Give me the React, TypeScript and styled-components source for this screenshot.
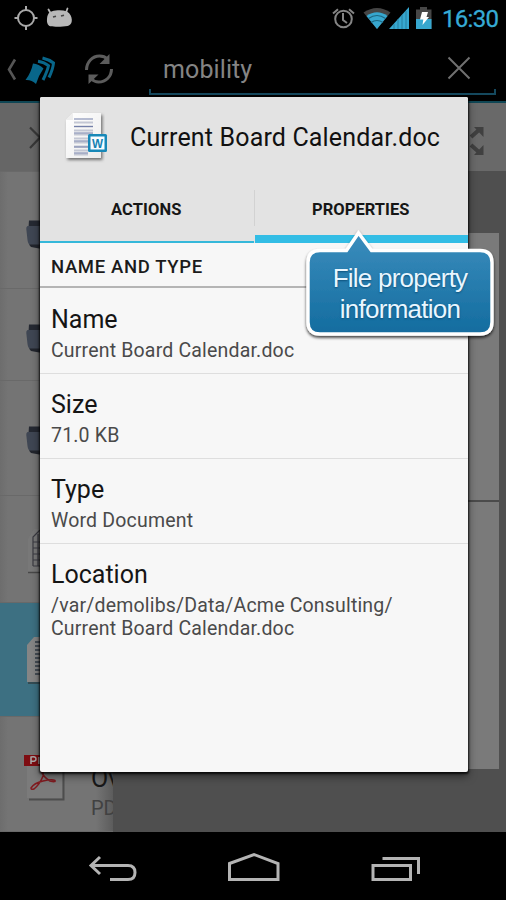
import React from "react";
import styled, { createGlobalStyle } from "styled-components";

const GlobalStyle = createGlobalStyle`
  * { box-sizing: border-box; }
  body { margin: 0; background: #000; font-family: Roboto, "Liberation Sans", sans-serif; }
  svg { flex: none; }
`;

const Screen = styled.div`
  position: relative;
  display: flex;
  flex-direction: column;
  width: 506px;
  height: 900px;
  overflow: hidden;
  background: #000;
`;

const StatusBar = styled.header`
  display: flex;
  justify-content: space-between;
  height: 37px;
  padding-right: 7px;
`;

const StatusGroup = styled.div`
  display: flex;
  height: 37px;
`;

const Clock = styled.span`
  width: 57px;
  font-size: 24px;
  line-height: 38px;
  letter-spacing: -0.7px;
  color: #36abd5;
  -webkit-text-stroke: 0.3px #36abd5;
  white-space: nowrap;
`;

const ActionBar = styled.div`
  display: flex;
  height: 66px;
  border-bottom: 2px solid #0f4654;
`;

const ActionIcons = styled.div`
  width: 149px;
`;

const SearchField = styled.div`
  display: flex;
  justify-content: space-between;
  align-items: center;
  width: 347px;
  height: 58px;
  padding: 6px 23px 0 13px;
  border: solid #15495e;
  border-width: 0 2px 2px;
  border-image: linear-gradient(transparent 90%, #15495e 90%) 1 2 2 2;
`;

const Query = styled.span`
  margin-top: 3px;
  margin-left: -1px;
  font-size: 25px;
  line-height: 34px;
  letter-spacing: 0.1px;
  color: #848484;
`;

const Workspace = styled.main`
  display: flex;
  height: 729px;
  background: #4f4f4f;
`;

const FileList = styled.aside`
  width: 113px;
  flex: none;
  overflow: hidden;
  background: linear-gradient(90deg, #6d6d6d 0, #747474 8px, #747474 96px, #5c5c5c 113px);
`;

const FileRow = styled.div<{ $height: number; $tone?: "header" | "selected" }>`
  display: flex;
  height: ${(p) => p.$height}px;
  border-bottom: 1px solid #696969;
  background: ${(p) =>
    p.$tone === "header" ? "#666" : p.$tone === "selected" ? "#3d7082" : "transparent"};
`;

const FileText = styled.div`
  display: flex;
  flex-direction: column;
  padding-top: 45px;
  margin-left: 11px;
  white-space: nowrap;
`;

const FileName = styled.span`
  font-size: 25px;
  line-height: 34px;
  color: #181818;
`;

const FileKind = styled.span`
  font-size: 20px;
  line-height: 24px;
  color: #414141;
`;

const Preview = styled.section`
  flex: 1;
  display: flex;
  flex-direction: column;
`;

const PreviewHeader = styled.div`
  display: flex;
  justify-content: flex-end;
  height: 68px;
  padding: 22px 22px 0 0;
  background: #696969;
`;

const Sheet = styled.div`
  width: 386px;
  height: 536px;
  margin-top: 62px;
  padding-top: 267px;
  background: #7a7a7a;
`;

const SheetRule = styled.div`
  height: 2px;
  background: #4b4b4b;
`;

const NavBar = styled.nav`
  height: 68px;
`;

const Dialog = styled.section`
  position: absolute;
  left: 40px;
  top: 97px;
  width: 428px;
  height: 675px;
  overflow: hidden;
  border-radius: 2px;
  background: #f7f7f7;
  box-shadow: 0 1px 2px 1px rgba(0, 0, 0, 0.75), 0 4px 8px rgba(0, 0, 0, 0.5);
`;

const DialogHead = styled.div`
  display: flex;
  height: 93px;
  padding-left: 20px;
  background: #e3e3e3;
`;

const DialogTitle = styled.h1`
  margin: 0 0 0 20px;
  padding-top: 24px;
  font-size: 25px;
  font-weight: 400;
  line-height: 34px;
  letter-spacing: 0.16px;
  white-space: nowrap;
  color: #111;
`;

const Tabs = styled.div`
  display: flex;
  height: 53px;
  background: #e3e3e3;
`;

const Tab = styled.div<{ $active?: boolean }>`
  flex: 1;
  height: 53px;
  padding-top: 6px;
  padding-right: 1px;
  border-bottom: ${(p) => (p.$active ? 8 : 2)}px solid ${(p) => (p.$active ? "#33bde5" : "#35b8da")};
  font-size: 16.5px;
  font-weight: 700;
  line-height: 28px;
  letter-spacing: ${(p) => (p.$active ? 0.02 : 0.1)}px;
  text-align: center;
  color: #161616;
`;

const TabDivider = styled.div`
  width: 1px;
  height: 36px;
  background: #d2d2d2;
`;

const SectionTitle = styled.h2`
  height: 45px;
  margin: 0;
  padding: 8px 11px 0;
  border-bottom: 2px solid #b5b5b5;
  font-size: 18.5px;
  font-weight: 500;
  line-height: 32px;
  letter-spacing: 0.65px;
  color: #1b1b1b;
`;

const Property = styled.div`
  min-height: 85px;
  padding: 14px 11px 0;
  border-bottom: 1px solid #dedede;
  &:first-of-type { min-height: 86px; }
  &:last-child { border-bottom: none; }
`;

const PropertyList = styled.div`
  & > :first-child {
    padding-top: 15px;
  }
`;

const PropertyName = styled.div`
  font-size: 25px;
  line-height: 34px;
  color: #151515;
`;

const PropertyValue = styled.div`
  margin-top: 2px;
  font-size: 19.5px;
  line-height: 23px;
  letter-spacing: 0.18px;
  white-space: pre-line;
  color: #4a4a4a;
`;

const Callout = styled.div`
  position: absolute;
  left: 300px;
  top: 222px;
  width: 206px;
  height: 126px;
`;

const CalloutShape = styled.svg`
  position: absolute;
  inset: 0;
`;

const CalloutText = styled.p`
  position: relative;
  margin: 0;
  padding-top: 41px;
  padding-right: 6px;
  font-family: "Liberation Sans", Arial, sans-serif;
  font-size: 26px;
  line-height: 31px;
  letter-spacing: -0.75px;
  text-align: center;
  color: #e9f6ff;
  text-shadow: 0 1px 2px #0b4f79;
`;

const NotificationIcons = () => (
  <svg width="80" height="37" fill="none">
    <circle cx="26" cy="18" r="8" stroke="#a9a9a9" strokeWidth="2" />
    <path d="M26 6v5M26 25v5M14.5 18h4M33.500 18h4" stroke="#a9a9a9" strokeWidth="2" />
    <path
      d="M50.500 13 48.500 9.500M66 12.500 67.500 8.500"
      stroke="#b5b5b5" strokeWidth="1.800" strokeLinecap="round"
    />
    <path
      d="M50 12q4-2 8.500-1.800Q63 10 67 11.500c3.500 2 4.500 5 4.800 8 .2 4-1.800 6-4.300 6.500-5 1-13 1-17 .3-3-.8-3.800-4-3.500-7.300.2-3 1-5.500 3-7z"
      fill="#b8b8b8"
    />
    <path d="M53 17l3-.8M61 16l3-.8" stroke="#444" strokeWidth="1.500" />
  </svg>
);

const SystemIcons = () => (
  <svg width="112" height="37" fill="none">
    <circle cx="13.500" cy="19" r="8.300" stroke="#858585" strokeWidth="2" />
    <path d="M13 13v7l4 3M3 13.500 8 9.200M24 13.500 19 9.200" stroke="#858585" strokeWidth="2" />
    <path d="M33.500 12.500Q47 3.500 60.500 12.500L47 29z" fill="#454545" />
    <path d="M36.500 16Q47 8.500 57.500 16L47 29z" fill="#37a7cf" />
    <path d="M38.500 18.500Q47 12.500 55.500 18.500M41 22.500Q47 18.500 53 22.500" stroke="#1b6681" strokeWidth="1.200" />
    <path d="M59 29 79 7v22z" fill="#37a7cf" />
    <path d="M64 24v5M68 19v10M72 15v14M76 11v18" stroke="#277f9f" strokeWidth="1" />
    <path d="M86 29V9.500h4V7h7v2.500h4.500V29z" fill="#474747" />
    <path d="M86 19h15.500v10H86z" fill="#37a7cf" />
    <path d="M92 12h6l-1.500 5H99l-6.500 8 .8-5.500H90z" fill="#fff" />
  </svg>
);

const ToolbarIcons = () => (
  <svg width="149" height="62" fill="none">
    <path d="M15 22.500 9 32.500 15 42.500" stroke="#555" strokeWidth="2.600" />
    <path d="M33 26.500q6 .5 10.500 5-5 7-7.500 15.500-4.500-4.500-10.500-4 5.500-7 7.500-16.500z" fill="#08668a" />
    <path d="M38 24.200q6.500 1 10.500 4.500-1 5-5.500 14.300M42.500 21q6.500 1.500 11 5-.5 6-4.500 14.500" stroke="#08668a" strokeWidth="3" />
    <path d="M86.500 33c0-8 6-14 13-14 3 0 6 1 8 3M111.500 32c0 8-6 13-13 13-3 0-5-1-7-3" stroke="#5c5c5c" strokeWidth="3" />
    <path d="M109.500 17v10H99.500zM88.500 47V37.500h10z" fill="#5c5c5c" />
  </svg>
);

const ClearIcon = () => (
  <svg width="24" height="24" fill="none">
    <path d="M1.500 1.500 22.500 22.500M22.500 1.500 1.500 22.500" stroke="#707070" strokeWidth="2" />
  </svg>
);

const CollapseIcon = () => (
  <svg width="42" height="68" fill="none">
    <path d="M30 24.500 40 34.500 30 45" stroke="#383838" strokeWidth="2.200" />
  </svg>
);

const ContactIcon = ({ top }: { top: number }) => (
  <svg width="42" height="90" fill="none">
    <g transform={`translate(26 ${top})`}>
      <path d="M3 .5h13V8H2.500z" fill="#252932" />
      <path d="M1.500 6H16v19H4q-2-1-2.500-5L.3 9q-.3-2 1.200-3z" fill="#3f4653" />
      <path d="M3 24.500h13V29l-11-2z" fill="#22252d" />
    </g>
  </svg>
);

const GridDocIcon = () => (
  <svg width="42" height="106" fill="none">
    <path d="M28 76V43l6-10h8v43z" fill="#787878" />
    <path d="M28 76.500h14" stroke="#484848" strokeWidth="1.500" />
    <path d="M33 70V41l7-7M33 70h9M33 46h9M33 52h9M33 58h9M33 64h9M38 38v32" stroke="#3b3b42" strokeWidth="1.200" />
  </svg>
);

const TextDocIcon = () => (
  <svg width="42" height="113" fill="none">
    <path d="M27 79V42l7-8h8v45z" fill="#858585" />
    <path d="M28 80h14" stroke="#334c54" strokeWidth="2" />
    <path d="M35 39h7M35 43h7M35 47h7M35 51h7M35 55h7M35 59h7M35 63h7M35 67h7M35 71h7" stroke="#303b46" strokeWidth="1.500" />
  </svg>
);

const PdfIcon = () => (
  <svg width="80" height="110" fill="none">
    <path d="M29 82.500h34.500V50" stroke="#4d4d4d" strokeWidth="2" />
    <path d="M27 40h35v41H27z" fill="#7b7b7b" />
    <path d="M24 38h19v11H24z" fill="#7e0d12" />
    <path d="M31 47v-7q5-1 5 2t-5 2M39 40v7" stroke="#aaa" strokeWidth="1.500" />
    <path d="M41 52q3 3 2 7-3 8-9 13-3 1-3-1 3-5 12-7 9-2 12-.5 1 2-5 .5-7-4-9-11z" stroke="#801b20" strokeWidth="1.500" />
  </svg>
);

const ExpandIcon = () => (
  <svg width="28" height="32" fill="none">
    <path d="M15 12l9-8M15 20l9 8" stroke="#404040" strokeWidth="4" />
    <path d="M18 2h9.500v10zM18 30h9.500V20z" fill="#404040" />
  </svg>
);

const WordIcon = () => (
  <svg width="50" height="70" viewBox="0 0 50 70" fill="none">
    <defs>
      <linearGradient id="paper" x2="1" y2="1">
        <stop stopColor="#fff" />
        <stop offset="1" stopColor="#ececec" />
      </linearGradient>
      <filter id="paperShadow">
        <feDropShadow dx="1.500" dy="2" stdDeviation="1.500" floodOpacity=".5" />
      </filter>
    </defs>
    <path d="M6 61V23l7-7h28v45z" fill="url(#paper)" filter="url(#paperShadow)" />
    <path d="M6 23l7-7v7z" fill="#eee" />
    <path d="M14 25.500h19M14 29.500h19M14 33.500h19M14 37.500h19M14 41.500h19M14 45.500h14M14 49.500h14M14 53.500h14M14 57.500h14" stroke="#c3c7d4" strokeWidth="2" />
    <path d="M14 22h19M14 29.500h19M14 36h19M14 44h14M14 50h14M14 56h14" stroke="#7480aa" strokeWidth="1.200" />
    <rect x="28" y="37" width="19" height="18" rx="1.500" fill="#1788b8" />
    <rect x="30.500" y="39.500" width="14" height="13" fill="#f8fcff" />
    <text x="37.500" y="50.500" textAnchor="middle" fontFamily="Liberation Sans" fontWeight="700" fontSize="13" textLength="11" lengthAdjust="spacingAndGlyphs" fill="#1582b2">W</text>
  </svg>
);

const CalloutBubble = () => (
  <CalloutShape width="206" height="126" fill="none">
    <defs>
      <linearGradient id="bubble" x2="0" y2="1">
        <stop stopColor="#3b8dbd" />
        <stop offset="1" stopColor="#136c9f" />
      </linearGradient>
      <filter id="bubbleShadow" x="-10%" y="-10%" width="120%" height="125%">
        <feDropShadow dx="0" dy="2" stdDeviation="1.800" floodOpacity=".75" />
      </filter>
    </defs>
    <path
      d="M20 28.500H46.500L58.500 11 71.500 28.500H180q12 0 12 12V100q0 12-12 12H20Q8 112 8 100V40.500q0-12 12-12z"
      fill="url(#bubble)" stroke="#fff" strokeWidth="3.400" filter="url(#bubbleShadow)"
    />
  </CalloutShape>
);

const NavIcons = () => (
  <svg width="506" height="68" fill="none" stroke="#b4b4b4" strokeWidth="3">
    <path d="M100 25 91 33.500 100 42M91 33.500h37q7 0 7 7t-7 7H110" />
    <path d="M229.500 31.500 254 22.500 278 31.500V47.500H229.500z" />
    <path d="M373 33.500h37.500v14H373zM382.500 26.500H418.500V42" />
  </svg>
);

const properties = [
  { name: "Name", value: "Current Board Calendar.doc" },
  { name: "Size", value: "71.0 KB" },
  { name: "Type", value: "Word Document" },
  { name: "Location", value: "/var/demolibs/Data/Acme Consulting/\nCurrent Board Calendar.doc" },
];

export default function App() {
  return (
    <Screen>
      <GlobalStyle />
      <StatusBar>
        <NotificationIcons />
        <StatusGroup>
          <SystemIcons />
          <Clock>16:30</Clock>
        </StatusGroup>
      </StatusBar>
      <ActionBar>
        <ActionIcons><ToolbarIcons /></ActionIcons>
        <SearchField>
          <Query>mobility</Query>
          <ClearIcon />
        </SearchField>
      </ActionBar>
      <Workspace>
        <FileList>
          <FileRow $height={69} $tone="header"><CollapseIcon /></FileRow>
          <FileRow $height={117}><ContactIcon top={48} /></FileRow>
          <FileRow $height={92}><ContactIcon top={35} /></FileRow>
          <FileRow $height={115}><ContactIcon top={45} /></FileRow>
          <FileRow $height={107}><GridDocIcon /></FileRow>
          <FileRow $height={114} $tone="selected"><TextDocIcon /></FileRow>
          <FileRow $height={115}>
            <PdfIcon />
            <FileText>
              <FileName>Overview</FileName>
              <FileKind>PDF</FileKind>
            </FileText>
          </FileRow>
        </FileList>
        <Preview>
          <PreviewHeader><ExpandIcon /></PreviewHeader>
          <Sheet><SheetRule /></Sheet>
        </Preview>
      </Workspace>
      <NavBar><NavIcons /></NavBar>
      <Dialog>
        <DialogHead>
          <WordIcon />
          <DialogTitle>Current Board Calendar.doc</DialogTitle>
        </DialogHead>
        <Tabs>
          <Tab>ACTIONS</Tab>
          <TabDivider />
          <Tab $active>PROPERTIES</Tab>
        </Tabs>
        <SectionTitle>NAME AND TYPE</SectionTitle>
        <PropertyList>
          {properties.map((item) => (
            <Property key={item.name}>
              <PropertyName>{item.name}</PropertyName>
              <PropertyValue>{item.value}</PropertyValue>
            </Property>
          ))}
        </PropertyList>
      </Dialog>
      <Callout>
        <CalloutBubble />
        <CalloutText>File property<br />information</CalloutText>
      </Callout>
    </Screen>
  );
}
